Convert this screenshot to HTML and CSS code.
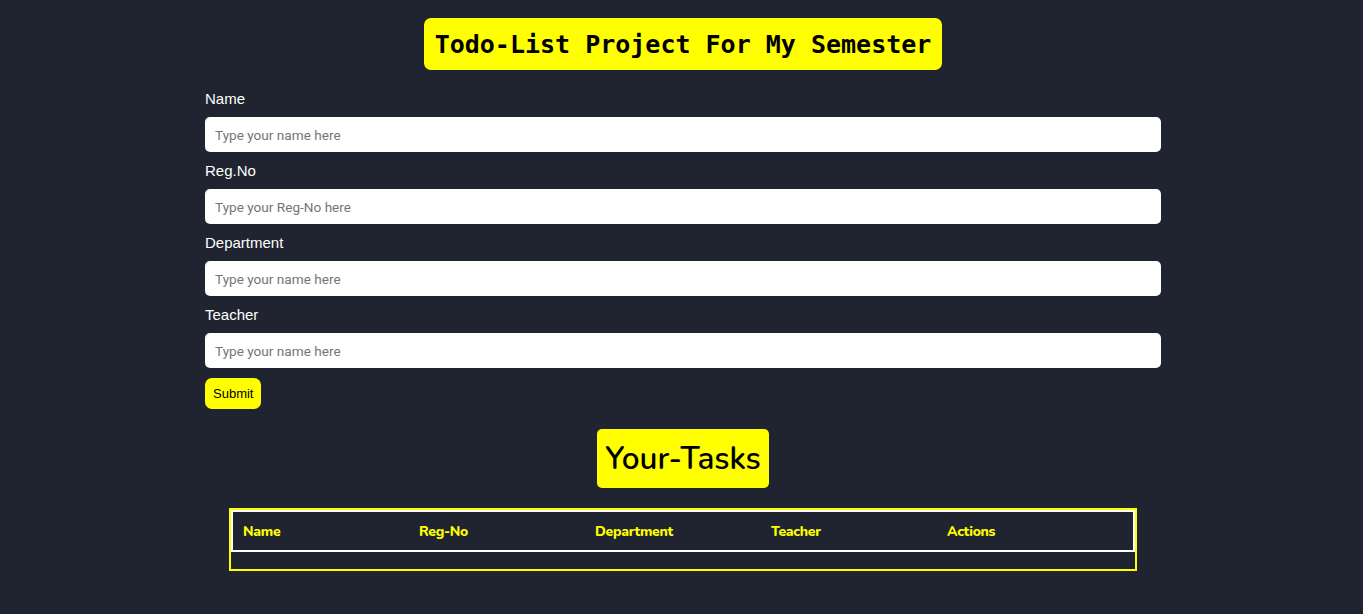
FILE: index.html
```html
<!DOCTYPE html>
<html>
<head>
<meta charset="utf-8">
<link rel="stylesheet" href="styles.css">
</head>
<body>
<div class="page">
  <div class="title-wrap"><h1 class="title">Todo-List Project For My Semester</h1></div>
  <form class="form">
    <label class="label">Name</label>
    <input class="input" type="text" placeholder="Type your name here">
    <label class="label">Reg.No</label>
    <input class="input" type="text" placeholder="Type your Reg-No here">
    <label class="label">Department</label>
    <input class="input" type="text" placeholder="Type your name here">
    <label class="label">Teacher</label>
    <input class="input" type="text" placeholder="Type your name here">
    <div><button class="submit" type="button">Submit</button></div>
  </form>
  <div class="title-wrap"><h2 class="tasks-title">Your-Tasks</h2></div>
  <div class="tasks-table">
    <div class="tasks-head">
      <div class="th">Name</div>
      <div class="th">Reg-No</div>
      <div class="th">Department</div>
      <div class="th">Teacher</div>
      <div class="th">Actions</div>
    </div>
  </div>
</div>
</body>
</html>
```
FILE: styles.css
```css
html, body {
  margin: 0;
  padding: 0;
  background: #1f2430;
  min-height: 100%;
}
body {
  font-family: "Liberation Sans", Arial, sans-serif;
  color: #ffffff;
}
.page {
  padding-top: 18px;
  padding-left: 3px;
  display: flex;
  flex-direction: column;
  align-items: center;
}
.title-wrap {
  display: flex;
  justify-content: center;
}
.title {
  margin: 0;
  background: #ffff00;
  color: #000;
  font-family: "DejaVu Sans Mono", "Liberation Mono", monospace;
  font-weight: bold;
  font-size: 25px;
  line-height: 30px;
  padding: 12px 11px 10px;
  border-radius: 7px;
}
.form {
  width: 956px;
  margin-top: 20px;
  display: flex;
  flex-direction: column;
}
.label {
  font-size: 15px;
  line-height: 18px;
  margin-bottom: 9px;
  color: #fff;
}
.input {
  box-sizing: border-box;
  height: 35px;
  border: none;
  border-radius: 5px;
  background: #fff;
  padding: 0 10px;
  font-family: Roboto, "Liberation Sans", sans-serif;
  font-size: 13.6px;
  margin-bottom: 10px;
  outline: none;
}
.input::placeholder {
  color: #757575;
}
.submit {
  background: #ffff00;
  border: none;
  border-radius: 7px;
  height: 31px;
  padding: 0 8px;
  font-family: "Liberation Sans", Arial, sans-serif;
  font-size: 13px;
  color: #000;
}
.tasks-title {
  margin: 20px 0 0 0;
  background: #ffff00;
  color: #000;
  font-family: "Nunito", Lato, "Noto Sans", sans-serif;
  font-weight: 600;
  font-size: 31.5px;
  line-height: 59px;
  height: 59px;
  padding: 0 8px;
  border-radius: 5px;
}
.tasks-table {
  box-sizing: border-box;
  width: 908px;
  margin-top: 20px;
  border: 2px solid #ffff00;
  padding-bottom: 17px;
}
.tasks-head {
  box-sizing: border-box;
  height: 42px;
  border: 2px solid #ffffff;
  padding: 0 10px;
  display: grid;
  grid-template-columns: repeat(5, 176px);
  align-items: center;
}
.th {
  color: #ffff00;
  font-family: "Nunito", Lato, "Noto Sans", sans-serif;
  font-weight: 800;
  font-size: 14px;
  letter-spacing: -0.3px;
}
```
